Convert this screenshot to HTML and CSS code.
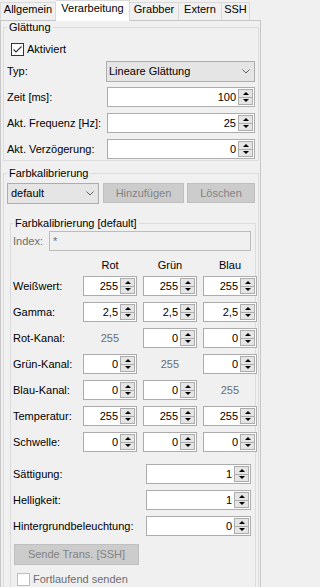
FILE: index.html
```html
<!DOCTYPE html>
<html lang="de">
<head>
<meta charset="utf-8">
<title>Verarbeitung</title>
<link rel="stylesheet" href="styles.css">
</head>
<body>
<div class="tabs">
  <div class="tab tab-allgemein">Allgemein</div>
  <div class="tab tab-verarbeitung active">Verarbeitung</div>
  <div class="tab tab-grabber">Grabber</div>
  <div class="tab tab-extern">Extern</div>
  <div class="tab tab-ssh">SSH</div>
</div>
<div class="pane">
  <fieldset class="group group-smooth">
    <legend>Glättung</legend>
    <div class="check-row">
      <span class="checkbox"><svg width="11" height="11" viewBox="0 0 11 11"><polyline points="1.5,5.5 4,8 9.5,2.5" fill="none" stroke="#333" stroke-width="1.1"/></svg></span>
      <span>Aktiviert</span>
    </div>
    <div class="field-row row-first">
      <span class="field-label">Typ:</span>
      <div class="combo combo-wide"><span class="combo-text">Lineare Glättung</span><span class="chev"><svg width="8" height="5" viewBox="0 0 8 5"><polyline points="0.5,0.5 4,4 7.5,0.5" fill="none" stroke="#606060" stroke-width="1"/></svg></span></div>
    </div>
    <div class="field-row row-zeit">
      <span class="field-label">Zeit [ms]:</span>
      <div class="spin spin-wide"><span class="spin-val">100</span><span class="spin-btns"><span class="spin-btn up"></span><span class="spin-btn down"></span></span></div>
    </div>
    <div class="field-row">
      <span class="field-label">Akt. Frequenz [Hz]:</span>
      <div class="spin spin-wide"><span class="spin-val">25</span><span class="spin-btns"><span class="spin-btn up"></span><span class="spin-btn down"></span></span></div>
    </div>
    <div class="field-row">
      <span class="field-label">Akt. Verzögerung:</span>
      <div class="spin spin-wide"><span class="spin-val">0</span><span class="spin-btns"><span class="spin-btn up"></span><span class="spin-btn down"></span></span></div>
    </div>
  </fieldset>

  <fieldset class="group group-color">
    <legend>Farbkalibrierung</legend>
    <div class="profile-row">
      <div class="combo combo-profile"><span class="combo-text">default</span><span class="chev"><svg width="8" height="5" viewBox="0 0 8 5"><polyline points="0.5,0.5 4,4 7.5,0.5" fill="none" stroke="#606060" stroke-width="1"/></svg></span></div>
      <div class="btn btn-add">Hinzufügen</div>
      <div class="btn btn-del">Löschen</div>
    </div>

    <fieldset class="group group-inner">
      <legend>Farbkalibrierung [default]</legend>
      <div class="index-row">
        <span class="index-label">Index:</span>
        <div class="index-box">*</div>
      </div>

      <div class="grid head-grid">
        <span></span>
        <span class="col-head">Rot</span>
        <span class="col-head">Grün</span>
        <span class="col-head">Blau</span>
      </div>

      <div class="grid value-grid">
        <span class="row-label">Weißwert:</span>
        <div class="spin"><span class="spin-val">255</span><span class="spin-btns"><span class="spin-btn up"></span><span class="spin-btn down"></span></span></div>
        <div class="spin"><span class="spin-val">255</span><span class="spin-btns"><span class="spin-btn up"></span><span class="spin-btn down"></span></span></div>
        <div class="spin"><span class="spin-val">255</span><span class="spin-btns"><span class="spin-btn up"></span><span class="spin-btn down"></span></span></div>

        <span class="row-label">Gamma:</span>
        <div class="spin"><span class="spin-val">2,5</span><span class="spin-btns"><span class="spin-btn up"></span><span class="spin-btn down"></span></span></div>
        <div class="spin"><span class="spin-val">2,5</span><span class="spin-btns"><span class="spin-btn up"></span><span class="spin-btn down"></span></span></div>
        <div class="spin"><span class="spin-val">2,5</span><span class="spin-btns"><span class="spin-btn up"></span><span class="spin-btn down"></span></span></div>

        <span class="row-label">Rot-Kanal:</span>
        <span class="static-val">255</span>
        <div class="spin"><span class="spin-val">0</span><span class="spin-btns"><span class="spin-btn up"></span><span class="spin-btn down"></span></span></div>
        <div class="spin"><span class="spin-val">0</span><span class="spin-btns"><span class="spin-btn up"></span><span class="spin-btn down"></span></span></div>

        <span class="row-label">Grün-Kanal:</span>
        <div class="spin"><span class="spin-val">0</span><span class="spin-btns"><span class="spin-btn up"></span><span class="spin-btn down"></span></span></div>
        <span class="static-val">255</span>
        <div class="spin"><span class="spin-val">0</span><span class="spin-btns"><span class="spin-btn up"></span><span class="spin-btn down"></span></span></div>

        <span class="row-label">Blau-Kanal:</span>
        <div class="spin"><span class="spin-val">0</span><span class="spin-btns"><span class="spin-btn up"></span><span class="spin-btn down"></span></span></div>
        <div class="spin"><span class="spin-val">0</span><span class="spin-btns"><span class="spin-btn up"></span><span class="spin-btn down"></span></span></div>
        <span class="static-val">255</span>

        <span class="row-label">Temperatur:</span>
        <div class="spin"><span class="spin-val">255</span><span class="spin-btns"><span class="spin-btn up"></span><span class="spin-btn down"></span></span></div>
        <div class="spin"><span class="spin-val">255</span><span class="spin-btns"><span class="spin-btn up"></span><span class="spin-btn down"></span></span></div>
        <div class="spin"><span class="spin-val">255</span><span class="spin-btns"><span class="spin-btn up"></span><span class="spin-btn down"></span></span></div>

        <span class="row-label">Schwelle:</span>
        <div class="spin"><span class="spin-val">0</span><span class="spin-btns"><span class="spin-btn up"></span><span class="spin-btn down"></span></span></div>
        <div class="spin"><span class="spin-val">0</span><span class="spin-btns"><span class="spin-btn up"></span><span class="spin-btn down"></span></span></div>
        <div class="spin"><span class="spin-val">0</span><span class="spin-btns"><span class="spin-btn up"></span><span class="spin-btn down"></span></span></div>
      </div>

      <div class="single-rows">
        <div class="single-row">
          <span class="row-label">Sättigung:</span>
          <div class="spin spin-mid"><span class="spin-val">1</span><span class="spin-btns"><span class="spin-btn up"></span><span class="spin-btn down"></span></span></div>
        </div>
        <div class="single-row">
          <span class="row-label">Helligkeit:</span>
          <div class="spin spin-mid"><span class="spin-val">1</span><span class="spin-btns"><span class="spin-btn up"></span><span class="spin-btn down"></span></span></div>
        </div>
        <div class="single-row">
          <span class="row-label">Hintergrundbeleuchtung:</span>
          <div class="spin spin-mid"><span class="spin-val">0</span><span class="spin-btns"><span class="spin-btn up"></span><span class="spin-btn down"></span></span></div>
        </div>
      </div>

      <div class="btn btn-send">Sende Trans. [SSH]</div>

      <div class="check-row check-send">
        <span class="checkbox disabled"></span>
        <span class="disabled-text">Fortlaufend senden</span>
      </div>
    </fieldset>
  </fieldset>
</div>
</body>
</html>
```

FILE: styles.css
```css
* {
  box-sizing: border-box;
}

html,
body {
  margin: 0;
  padding: 0;
}

body {
  width: 261px;
  height: 587px;
  overflow: hidden;
  background: #f0f0f0;
  font-family: "Liberation Sans", Arial, sans-serif;
  font-size: 11px;
  line-height: 13px;
  color: #000;
}

/* ---------- tabs ---------- */
.tabs {
  display: flex;
  align-items: flex-start;
  height: 20px;
}

.tab {
  height: 18px;
  margin-top: 2px;
  border-top: 1px solid #d9d9d9;
  border-right: 1px solid #d9d9d9;
  background: #f0f0f0;
  text-align: center;
  white-space: nowrap;
}

.tab-allgemein {
  width: 56px;
  border-left: 1px solid #d9d9d9;
}

.tab-verarbeitung {
  width: 74px;
}

.tab-grabber {
  width: 49px;
}

.tab-extern {
  width: 43px;
}

.tab-ssh {
  width: 28px;
}

.tab.active {
  height: 21px;
  margin-top: 0;
  padding-top: 1px;
  background: #fff;
  position: relative;
  z-index: 1;
}

/* ---------- pane ---------- */
.pane {
  width: 261px;
  height: 567px;
  overflow: hidden;
  border: 1px solid #c6c6c6;
  border-bottom: none;
  background: #f0f0f0;
}

/* ---------- group boxes ---------- */
.group {
  margin: 0;
  border: 1px solid #dcdcdc;
  min-width: 0;
}

.group > legend {
  padding: 0 2px;
  margin: 0;
  line-height: 13px;
}

.group-smooth {
  margin: 0 1px 0 2px;
  padding: 7px 3px 1px 3px;
}

.group-color {
  margin: 6px 1px 0 2px;
  padding: 3px 2px 0 3px;
}

.group-inner {
  margin: 13px 0 0 3px;
  padding: 1px 4px 0 2px;
}

/* ---------- checkbox ---------- */
.check-row {
  display: flex;
  align-items: center;
  height: 16px;
  margin-left: 4px;
  gap: 3px;
}

.checkbox {
  width: 13px;
  height: 13px;
  border: 1px solid #333;
  background: #fff;
  display: inline-flex;
  align-items: center;
  justify-content: center;
}

.checkbox.disabled {
  border-color: #bcbcbc;
}

.disabled-text {
  color: #6d6d6d;
}

/* ---------- field rows (Glättung) ---------- */
.field-row {
  display: flex;
  align-items: center;
  justify-content: space-between;
  margin-top: 6px;
}

.field-row.row-first {
  margin-top: 4px;
}

.field-row.row-zeit {
  margin-top: 5px;
}

.field-label {
  white-space: nowrap;
}

/* ---------- combo ---------- */
.combo {
  display: flex;
  align-items: center;
  justify-content: space-between;
  height: 21px;
  border: 1px solid #adadad;
  background: #e5e5e5;
}

.combo-text {
  padding-left: 2px;
  white-space: nowrap;
}

.chev {
  width: 17px;
  display: flex;
  align-items: center;
  justify-content: center;
}

.combo-wide {
  width: 149px;
}

.combo-profile {
  width: 92px;
}

.combo-profile .combo-text {
  padding-left: 3px;
}

/* ---------- spin boxes ---------- */
.spin {
  display: flex;
  height: 20px;
  border: 1px solid #acacac;
  background: #fff;
}

.spin-val {
  flex: 1;
  text-align: right;
  padding-right: 2px;
  line-height: 18px;
  white-space: nowrap;
}

.spin-btns {
  width: 15px;
  margin: 1px 1px 1px 0;
  display: flex;
  flex-direction: column;
  border: 1px solid #acacac;
  background: #e5e5e5;
}

.spin-btn {
  flex: 1;
  display: flex;
  align-items: center;
  justify-content: center;
}

.spin-btn + .spin-btn {
  border-top: 1px solid #acacac;
}

.spin-btn.up::before {
  content: "";
  border-left: 3px solid transparent;
  border-right: 3px solid transparent;
  border-bottom: 3px solid #000;
}

.spin-btn.down::before {
  content: "";
  border-left: 3px solid transparent;
  border-right: 3px solid transparent;
  border-top: 3px solid #000;
}

.spin-wide {
  width: 148px;
}

.spin-mid {
  width: 105px;
}

/* ---------- buttons ---------- */
.btn {
  height: 20px;
  border: 1px solid #bfbfbf;
  background: #cccccc;
  color: #838383;
  display: flex;
  align-items: center;
  justify-content: center;
  white-space: nowrap;
}

.profile-row {
  display: flex;
  align-items: flex-start;
  margin-right: 1px;
}

.btn-add {
  width: 81px;
  margin-left: 4px;
}

.btn-del {
  width: 68px;
  margin-left: 3px;
}

.btn-send {
  width: 125px;
  height: 21px;
  margin: 8px 0 0 1px;
}

/* ---------- index ---------- */
.index-row {
  display: flex;
  align-items: center;
}

.index-label {
  width: 36px;
  color: #6d6d6d;
}

.index-box {
  width: 202px;
  height: 20px;
  border: 1px solid #bcbcbc;
  background: #f0f0f0;
  color: #6d6d6d;
  padding-left: 3px;
  line-height: 18px;
}

/* ---------- grid ---------- */
.grid {
  display: grid;
  grid-template-columns: 64px 54px 54px 54px;
  column-gap: 6px;
}

.head-grid {
  margin-top: 8px;
}

.col-head {
  text-align: center;
}

.value-grid {
  margin-top: 4px;
  grid-auto-rows: 20px;
  row-gap: 6px;
  align-items: center;
}

.row-label {
  white-space: nowrap;
}

.static-val {
  text-align: right;
  padding-right: 18px;
  color: #6d6d6d;
}

/* ---------- single rows ---------- */
.single-rows {
  margin-top: 12px;
  display: flex;
  flex-direction: column;
  gap: 6px;
}

.single-row {
  display: flex;
  align-items: center;
  justify-content: space-between;
}

.check-send {
  margin-top: 6px;
}
```
